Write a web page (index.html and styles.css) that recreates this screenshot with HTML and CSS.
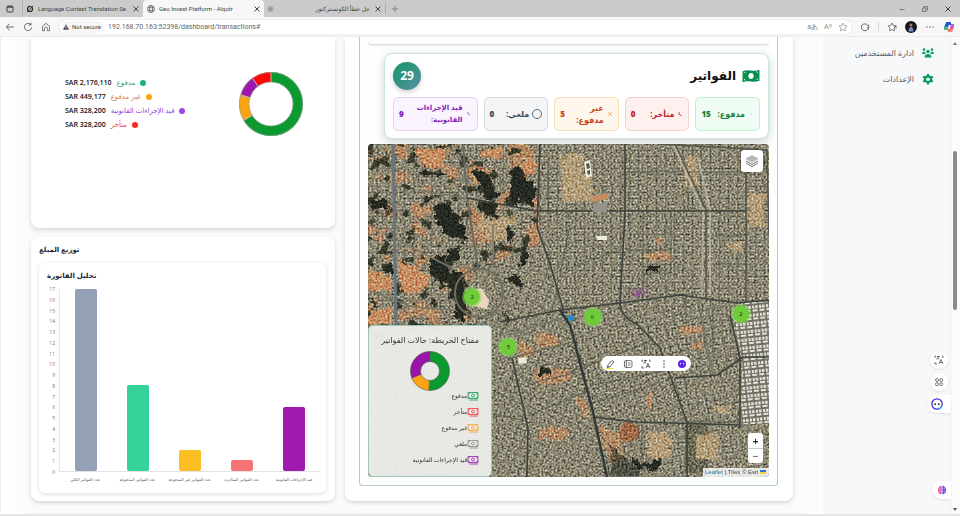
FILE: index.html
```html
<!DOCTYPE html>
<html lang="ar">
<head>
<meta charset="utf-8">
<meta name="viewport" content="width=device-width, initial-scale=1">
<title>Geo Invest Platform - Alqotr</title>
<link rel="stylesheet" href="styles.css">
</head>
<body>
<svg class="defs" aria-hidden="true">
  <symbol id="note" viewBox="0 0 12 10"><path d="M1 1.500h10v6H1zM2.500 9h8.500M1 3.200c1 0 1.700-.7 1.700-1.700M11 3.200c-1 0-1.700-.7-1.700-1.700M1 5.800c1 0 1.700.7 1.700 1.700M11 5.800c-1 0-1.700.7-1.700 1.700" fill="none" stroke="currentColor" stroke-width=".8"/><circle cx="6" cy="4.500" r="1.500" fill="none" stroke="currentColor" stroke-width=".8"/></symbol>
  <symbol id="close" viewBox="0 0 8 8"><path d="M1.500 1.500l5 5M6.500 1.500l-5 5" fill="none" stroke="currentColor"/></symbol>
  <symbol id="translate" viewBox="0 0 10 10"><path d="M1 3V1h1M3 1.500h3M4.500 1v1L2.500 4.500M3.300 2.500L5 4.500M8 1h1v2M1 7v2h2M5 9l2-4.500L9 9M5.800 7.500h2.500" fill="none" stroke="currentColor" stroke-width=".8"/></symbol>
</svg>

<header class="tabs">
  <button class="tab-menu" aria-label="Tab actions"><svg viewBox="0 0 8 8" class="i8"><rect x="1" y="1" width="6" height="6" rx="1" fill="none" stroke="currentColor"/><path d="M1 2h6" stroke="currentColor" stroke-width="1.500"/></svg></button>
  <div class="tab">
    <svg viewBox="0 0 8 8" class="i8"><circle cx="4" cy="4" r="2.500" fill="none" stroke="#222" stroke-width="1.200"/><path d="M1 7.200L7.200.8M2 1.500l1.500-.7" stroke="#222" stroke-width=".8"/></svg>
    <span class="tab-name">Language Context Translation Se</span>
    <button aria-label="Close tab"><svg class="i8"><use href="#close"/></svg></button>
  </div>
  <div class="tab tab-active">
    <svg viewBox="0 0 8 8" class="i8"><g fill="none" stroke="#555" stroke-width=".7"><circle cx="4" cy="4" r="3.500"/><ellipse cx="4" cy="4" rx="1.600" ry="3.500"/><path d="M.8 2.700h6.400M.8 5.300h6.400"/></g></svg>
    <span class="tab-name">Geo Invest Platform - Alqotr</span>
    <button aria-label="Close tab"><svg class="i8"><use href="#close"/></svg></button>
  </div>
  <div class="tab">
    <svg viewBox="0 0 8 8" class="i8"><circle cx="3.500" cy="4" r="3" fill="#aaa"/><path d="M1.500 4h4M3.500 2v4M2 2.500l3 3M5 2.500l-3 3" stroke="#888" stroke-width=".5"/></svg>
    <span class="tab-name" dir="rtl">حل خطأ الكونستركتور</span>
    <button aria-label="Close tab"><svg class="i8"><use href="#close"/></svg></button>
  </div>
  <button class="tab-new" aria-label="New tab"><svg viewBox="0 0 8 8" class="i8"><path d="M4 .8v6.400M.8 4h6.400" stroke="#777" stroke-width=".8"/></svg></button>
  <div class="window-buttons">
    <button aria-label="Minimise"><svg viewBox="0 0 8 8" class="i8"><path d="M1.500 4.500h5" stroke="#777"/></svg></button>
    <button aria-label="Restore"><svg viewBox="0 0 8 8" class="i8"><path d="M1.500 3h3.500v3.500H1.500zM3 3V1.500h3.500V5H5" fill="none" stroke="#666" stroke-width=".8"/></svg></button>
    <button aria-label="Close"><svg class="i8"><use href="#close"/></svg></button>
  </div>
</header>

<nav class="toolbar">
  <button aria-label="Back"><svg viewBox="0 0 10 10" class="i10"><path d="M9 5H1.500M4.500 1.800L1.300 5l3.200 3.200" fill="none" stroke="currentColor" stroke-width=".9"/></svg></button>
  <button aria-label="Reload"><svg viewBox="0 0 10 10" class="i10"><path d="M8.600 5.500A3.600 3.600 0 1 1 7.700 2.500M8 .8v2.200H5.800" fill="none" stroke="currentColor" stroke-width=".9"/></svg></button>
  <button aria-label="Home"><svg viewBox="0 0 10 10" class="i10"><path d="M1.500 4.500L5 1.300l3.500 3.200v4.200h-2V6.500a1.500 1.500 0 0 0-3 0v2.200h-2z" fill="none" stroke="currentColor" stroke-width=".8"/></svg></button>
  <div class="address">
    <button class="secure"><svg viewBox="0 0 8 8" class="i8"><path d="M4 1.200l3 5.600H1z" fill="#444"/><path d="M4 3v2M4 5.500v.8" stroke="#fff" stroke-width=".7"/></svg>Not secure</button>
    <input type="text" aria-label="Address" value="192.168.70.163:52398/dashboard/transactions#">
    <button aria-label="Translate page"><span class="mini">aあ</span></button>
    <button aria-label="Read aloud"><span class="mini">A⁾⁾</span></button>
    <button aria-label="Add to favourites"><svg viewBox="0 0 10 10" class="i10"><path id="star" d="M5 1l1.200 2.600 2.800.4-2 2 .5 2.900L5 7.500 2.500 8.900 3 6 1 4l2.800-.4z" fill="none" stroke="currentColor" stroke-width=".7"/></svg></button>
  </div>
  <button aria-label="Extensions"><svg viewBox="0 0 10 10" class="i10"><path d="M7.500 3.200a3.400 3.400 0 1 0 0 4.200l1-.2V5.500H7.300M7.500 3.200h1.200v2" fill="none" stroke="currentColor" stroke-width=".9"/></svg></button>
  <i class="divider"></i>
  <button aria-label="Favourites"><svg viewBox="0 0 10 10" class="i10"><use href="#star"/><path d="M7 4h3M7.500 6H10" stroke="currentColor" stroke-width=".7"/></svg></button>
  <button aria-label="Profile"><svg viewBox="0 0 12 12" class="i12"><circle cx="6" cy="6" r="6" fill="#15151f"/><circle cx="6" cy="4" r="1.500" fill="#b07a64"/><path d="M3.500 10.500q0-4.500 2.500-4.500t2.500 4.500z" fill="#6f8fc4"/></svg></button>
  <button class="more" aria-label="Settings"><svg viewBox="0 0 10 10" class="i10"><g fill="currentColor"><circle cx="2" cy="5" r=".7"/><circle cx="5" cy="5" r=".7"/><circle cx="8" cy="5" r=".7"/></g></svg></button>
  <button aria-label="Copilot"><svg viewBox="0 0 12 12" class="i12"><path d="M3.500 1h4l1 3H6L4.500 9H2Q.5 9 1 6.500z" fill="#2389dd"/><path d="M3.500 1h4l1 3H5.500L4 5.500H1.300z" fill="#2458c8"/><path d="M2 6h2.500l-.8 3H2Q.8 8.500 2 6z" fill="#62bd4a"/><path d="M8 3h2q1.500.3 1 2.500L9 10.500H5L4 8h2.200z" fill="#df5bb0"/><path d="M8 3h2q1.500.3 1 2.500l-.3 1H7z" fill="#b25be0"/><path d="M4 8h5.800L9 10.500H5z" fill="#f9774f"/><path d="M6 4.500h1.700L6.500 7.500H5z" fill="#fff"/></svg></button>
</nav>

<div class="page">
  <main class="content">
    <section class="column">
      <article class="card totals">
        <dl class="amounts">
          <div><dd>SAR 2,176,110</dd><dt class="c-green" dir="rtl">مدفوع</dt><i class="dot bg-green"></i></div>
          <div><dd>SAR 449,177</dd><dt class="c-amber" dir="rtl">غير مدفوع</dt><i class="dot bg-amber"></i></div>
          <div><dd>SAR 328,200</dd><dt class="c-purple" dir="rtl">قيد الإجراءات القانونية</dt><i class="dot bg-purple"></i></div>
          <div><dd>SAR 328,200</dd><dt class="c-red" dir="rtl">متأخر</dt><i class="dot bg-red"></i></div>
        </dl>
        <svg class="donut" viewBox="0 0 64 64" role="img" aria-label="توزيع المبلغ">
          <g fill="none" stroke-width="10" transform="rotate(-90 32 32)">
            <circle cx="32" cy="32" r="27" pathLength="1000" stroke="#0a9a2f" stroke-dasharray="663 337"/>
            <circle cx="32" cy="32" r="27" pathLength="1000" stroke="#fba40f" stroke-dasharray="137 863" stroke-dashoffset="-663"/>
            <circle cx="32" cy="32" r="27" pathLength="1000" stroke="#9c17ac" stroke-dasharray="100 900" stroke-dashoffset="-800"/>
            <circle cx="32" cy="32" r="27" pathLength="1000" stroke="#fd0606" stroke-dasharray="100 900" stroke-dashoffset="-900"/>
          </g>
          <path d="M32 0v10M4.500 48.500l8.600-5.200M1.300 23.500l9.800 2.400M13.500 6.200l5.800 8.200" stroke="#b5b5b5"/>
          <g fill="none" stroke="#999" stroke-width=".7"><circle cx="32" cy="32" r="31.600"/><circle cx="32" cy="32" r="22"/></g>
        </svg>
      </article>
      <article class="card distribution">
        <h2 dir="rtl">توزيع المبلغ</h2>
        <div class="chart-card">
          <h3 dir="rtl">تحليل الفاتورة</h3>
          <div class="chart">
            <ol class="axis"><li>17</li><li>16</li><li>15</li><li>14</li><li>13</li><li>12</li><li>11</li><li>10</li><li>9</li><li>8</li><li>7</li><li>6</li><li>5</li><li>4</li><li>3</li><li>2</li><li>1</li><li>0</li></ol>
            <div class="bars">
              <i class="bar b-slate" style="height:100%"></i>
              <i class="bar b-green" style="height:47.06%"></i>
              <i class="bar b-amber" style="height:11.76%"></i>
              <i class="bar b-red" style="height:5.88%"></i>
              <i class="bar b-purple" style="height:35.29%"></i>
            </div>
            <div class="bar-names" dir="ltr"><span dir="rtl">عدد الفواتير الكلي</span><span dir="rtl">عدد الفواتير المدفوعة</span><span dir="rtl">عدد الفواتير غير المدفوعة</span><span dir="rtl">عدد الفواتير المتأخرة</span><span dir="rtl">قيد الإجراءات القانونية</span></div>
          </div>
        </div>
      </article>
    </section>

    <section class="card board">
      <div class="panel">
        <div class="previous"></div>
        <div class="invoices">
          <div class="invoices-head">
            <strong class="count">29</strong>
            <h1 dir="rtl">الفواتير</h1>
            <svg class="cash" viewBox="0 0 18 14"><path d="M.5 2.300q4.200-1.800 8.500-.8t8.500-.8v11q-4.200 1.700-8.500.8t-8.500.8z" fill="#0b8f51"/><ellipse cx="9" cy="7" rx="2.600" ry="3" fill="#fff"/><path d="M2 4.500l1.500-1.500M14.500 2.500L16 3.700M2 10l1.500 1.500M14.500 11l1.500-1.500" fill="none" stroke="#fff" stroke-width=".9"/></svg>
          </div>
          <div class="stats">
            <div class="stat s-purple"><b>9</b><span dir="rtl">قيد الإجراءات القانونية:</span><svg viewBox="0 0 6 6"><path d="M2 1v2l2 1" fill="none" stroke="currentColor" stroke-width=".6"/></svg></div>
            <div class="stat s-gray"><b>0</b><span dir="rtl">ملغي:</span><svg class="ring" viewBox="0 0 10 10"><circle cx="5" cy="5" r="4.500" fill="none" stroke="currentColor" stroke-width=".8"/></svg></div>
            <div class="stat s-orange"><b>5</b><span dir="rtl">غير مدفوع:</span><svg viewBox="0 0 6 6"><path d="M.8.800l4.400 4.400M5.200.800L.8 5.200" stroke="#eda76a" stroke-width=".8"/></svg></div>
            <div class="stat s-red"><b>0</b><span dir="rtl">متأخر:</span><svg viewBox="0 0 6 6"><path d="M2 1v2.500l2.500 1" fill="none" stroke="currentColor" stroke-width=".8"/></svg></div>
            <div class="stat s-green"><b>15</b><span dir="rtl">مدفوع:</span><svg viewBox="0 0 6 6"><path d="M2 3l1 .5 1-1" fill="none" stroke="#8c9" stroke-width=".6"/></svg></div>
          </div>
        </div>

        <div class="map">
          <svg class="imagery" viewBox="0 0 401 333" preserveAspectRatio="xMidYMid slice" aria-label="صورة فضائية">
            <defs>
              <filter id="grain" x="0" y="0" width="100%" height="100%" color-interpolation-filters="sRGB"><feTurbulence type="fractalNoise" baseFrequency=".5" numOctaves="2" seed="4"/><feColorMatrix values="1.800 0 0 0 -.4  1.800 0 0 0 -.4  1.800 0 0 0 -.4  0 0 0 0 1"/></filter>
              <filter id="scrub" x="0" y="0" width="100%" height="100%" color-interpolation-filters="sRGB"><feTurbulence type="fractalNoise" baseFrequency=".08" numOctaves="4" seed="11"/><feColorMatrix values="0 0 0 0 .16  0 0 0 0 .18  0 0 0 0 .13  14 0 0 0 -8.600"/></filter>
              <filter id="soil" x="0" y="0" width="100%" height="100%" color-interpolation-filters="sRGB"><feTurbulence type="fractalNoise" baseFrequency=".05" numOctaves="5" seed="23"/><feColorMatrix values="0 0 0 0 .74  0 0 0 0 .54  0 0 0 0 .38  0 9 0 0 -4.900"/></filter>
              <filter id="rough" x="-10%" y="-10%" width="120%" height="120%"><feTurbulence type="fractalNoise" baseFrequency=".16" numOctaves="3" seed="8"/><feDisplacementMap in="SourceGraphic" scale="11" xChannelSelector="R" yChannelSelector="G"/></filter>
              <pattern id="blocks" width="9" height="6" patternUnits="userSpaceOnUse"><rect width="9" height="6" fill="#8f8977"/><path d="M0 0h9M0 0v6" stroke="#64645a" stroke-width="1.200"/><path d="M2 2h1.500v1H2zM6 1.500h2v1H6zM4 4h1.500v1H4zM7 4h1v1H7z" fill="#c0baa9"/></pattern>
              <pattern id="blocksA" href="#blocks" patternTransform="rotate(-22)"/>
              <pattern id="blocksB" href="#blocks" patternTransform="rotate(-10)"/>
              <pattern id="blocksC" href="#blocks" patternTransform="rotate(24)"/>
              <pattern id="sheds" width="7" height="8" patternUnits="userSpaceOnUse" patternTransform="rotate(-6)"><rect width="7" height="8" fill="#6f6d62"/><path d="M1 1h2v3H1zM4 1h2.500v3H4zM1 5h5v2H1z" fill="#f5f3ec"/></pattern>
              <clipPath id="west"><path d="M0 0h165l8 100-65 25-10 85H0z"/></clipPath>
            </defs>
            <rect width="401" height="333" fill="url(#blocks)"/>
            <path d="M110 124l65-10 20 52 50 167H124V180z" fill="url(#blocksC)"/>
            <path d="M202 170l50-8 150 0v171H240z" fill="url(#blocksB)"/>
            <path d="M202 163l50-5 7 20 40 40 20 60-95-7z" fill="url(#blocksA)"/>
            <rect width="401" height="333" fill="#73704f" opacity=".15"/>
            <g clip-path="url(#west)"><rect width="225" height="210" filter="url(#soil)" opacity=".8"/><rect width="225" height="210" filter="url(#scrub)" opacity=".85"/></g>
            <g filter="url(#rough)" fill="#c68e62">
              <path d="M48 4h28v20H56zM112 5h22v9h-22zM150 22l18-12v18l-14 6zM0 126l24 8v14H0zM0 165h24v15H0zM30 113l32 20-7 14-20 2z"/>
              <path d="M150 195l15 8-2 10-12 4zM168 190h22v12h-22zM165 225h35v14h-32zM172 285h28v9h-28zM208 250l14 16-3 8-12-16zM228 279l22 12 6 25-12 6z" opacity=".65"/>
              <path d="M192 10h22v20h10v28h-28zM107 78l40-6-8 25-22-2zM318 13h12v14h-12zM315 28h14v14h-14zM380 48h17v35h-17zM362 98h12v9h-12z" fill="#b8a179" opacity=".85"/>
              <path d="M280 289h22v25h-22zM326 290h24v26h-24zM348 262h14v6h-14z" fill="#b59d79"/>
              <path d="M313 182h22v8h-22zM323 198h10v6h-10zM265 213h6v10h-6zM278 250h6v13h-6zM275 108h28v8h-28zM288 95h6v6h-6z" opacity=".7"/>
            </g>
            <g filter="url(#rough)" fill="#282c23">
              <path d="M104 26q18-4 20 14l8 10q-6 10-16 4zM142 26l8-4 18 22-2 18-9-1-5-7-5 9-4-6zM108 57l20 2 2 16-12-2zM66 62l12-6 18 26 4 14-18-3-14-12zM80 105h12v12H80zM62 112h14l8 22-12 6-10-12zM78 128h18v22l-12 8zM153 104l8 4-5 16h-4zM140 133h14v8h-10zM15 121h10v8H15zM2 55l18 2v8H4zM140 83l6 6-2 10-4-2zM88 145l10 4-2 30-10-7zM134 165l10 12-4 4zM52 27l26 1v3H54z"/>
              <path d="M262 311l14 10 20-8-8 12h-18zM170 224h10v7h-10zM278 122h14v6h-14z"/>
              <path d="M243 300l30 28-3 5h-27z" opacity=".6"/>
            </g>
            <circle cx="261" cy="288" r="10" fill="#9c6848"/>
            <path d="M317 279h23v50h-23z" fill="#62614c" opacity=".8"/><path d="M328 291h22v24h-22z" fill="#b19c78"/>
            <rect width="401" height="333" filter="url(#grain)" class="grain"/>
            <path d="M375 158h26v122h-28l1-65-10-48z" fill="url(#sheds)" opacity=".85"/>
            <g fill="none" stroke="#4d5147" stroke-linejoin="round">
              <path d="M257 28h120M257 106h47M303 67v62M320 28v38M275 67v90M202 67h10M180 20v50M344 92h34M344 120h34M275 129h28M318 152v30M274 274v59M319 278h55M202 228l80-30M225 241l76-15M225 259l60-18M144 214l60-16M160 240l50-12M160 272l60-25M124 246l32 16M126 270l32 7M250 106l-48 18M202 80l-10 50M130 104l-10 22M345 160v60" stroke-width=".9" opacity=".85"/>
              <path d="M0 146l45 17 43 3M29 96l53 27 28 1M50 46l49 8M132 171l10 20 60-20M125 80v44M345 230l-15-75M238 333l80 0" stroke="#77786a" stroke-width="1.500"/>
              <path d="M25 0l3 180v153" stroke="#68757a" stroke-width="3"/>
              <path d="M95 0l4 53 11 71" stroke="#666b62" stroke-width="2"/>
              <circle cx="111" cy="149" r="24" stroke="#716d5c" stroke-width="2"/>
              <path d="M305 0l30 66-1 87M330 13l12 53v86" stroke="#d3ccb7" stroke-width="2" opacity=".6"/><path d="M307 0l31 66v87M378 20v138M399 6l2 85M290 0l110 6" stroke="#555549" stroke-width="1.500"/>
              <path d="M99 54l70 13h209M172 0l-3 83 13 37 14 48M257 0v70l-5 89q0 13 18 22l22 23 27 74v55M132 178l60-12 60-7 60-8 57 8 32-3M144 214l16 70-1 49M307 234l42-3 26-18h26M362 171l10 43v70M225 273l44 5 103 3" stroke="#3c423d" stroke-width="1.600"/>
              <path d="M192 166l10 15 23 87 14 65" stroke="#2e3937" stroke-width="2.500"/>
            </g>
            <path d="M229 92h10v4h-10zM150 214l8-1 1 6-8 1zM216 18l6-2 2 16-6 2z" fill="#eeeadb"/><path d="M218 20l3-1 1 5-3 1zM219 27l3-1v4l-2 1z" fill="#56564c"/>
            <path d="M224 52l16-3v6l-15 3z" fill="#c58d61"/><path d="M225 60l14-2v10h-14z" fill="#94928a"/>
            <path d="M101 147l12-3 8 12-2 9-18-4z" fill="#ead5bd"/>
            <g fill="none" stroke="#9d2db0"><path d="M265 146h11v6h-11z" stroke-dasharray="2 1"/><circle cx="270" cy="149" r="1.500"/></g>
            <circle cx="203" cy="174" r="3" fill="#238bd4"/>
          </svg>
          <span class="cluster k1">2</span><span class="cluster k2">6</span><span class="cluster k3">2</span><span class="cluster k4">5</span>
          <button class="layers" aria-label="الطبقات"><svg viewBox="0 0 14 14"><path d="M1 8.500L7 12l6-3.500v1.300L7 13.300 1 9.800z" fill="#8a8a8a"/><path d="M1 6.300l6 3.500 6-3.500v1.400l-6 3.500-6-3.500z" fill="#9c9c9c"/><path d="M1 4.200L7 1l6 3.200v1L7 8.700 1 5.200z" fill="#b9b9b9"/></svg></button>
          <div class="legend">
            <h2 dir="rtl">مفتاح الخريطة: حالات الفواتير</h2>
            <svg class="legend-donut" viewBox="0 0 40 40" role="img" aria-label="حالات الفواتير">
              <g fill="none" stroke-width="10" transform="rotate(-90 20 20)"><circle cx="20" cy="20" r="14.500" pathLength="100" stroke="#0a9a2f" stroke-dasharray="51 49"/><circle cx="20" cy="20" r="14.500" pathLength="100" stroke="#fba40f" stroke-dasharray="18 82" stroke-dashoffset="-51"/><circle cx="20" cy="20" r="14.500" pathLength="100" stroke="#9a14aa" stroke-dasharray="31 69" stroke-dashoffset="-69"/></g>
              <g fill="none" stroke="#555" stroke-width=".6"><circle cx="20" cy="20" r="19.500"/><circle cx="20" cy="20" r="9.500"/><path d="M20 .5v10M18.800 39.500l.6-10M1.700 27l9-3.500"/></g>
            </svg>
            <ul>
              <li><span dir="rtl">مدفوع</span><svg class="n-green"><use href="#note"/></svg></li>
              <li><span dir="rtl">متأخر</span><svg class="n-red"><use href="#note"/></svg></li>
              <li><span dir="rtl">غير مدفوع</span><svg class="n-amber"><use href="#note"/></svg></li>
              <li><span dir="rtl">ملغي</span><svg class="n-gray"><use href="#note"/></svg></li>
              <li><span dir="rtl">قيد الإجراءات القانونية</span><svg class="n-purple"><use href="#note"/></svg></li>
            </ul>
          </div>
          <div class="selection">
            <button aria-label="Highlight"><svg viewBox="0 0 10 10"><path d="M2.500 6.500l4.500-5 2 1.500-4.500 5zM2.500 6.500L2 8.500l2.500-.5" fill="none" stroke="#444" stroke-width=".8"/><path d="M1 9.500h7" stroke="#f1e22c"/></svg></button>
            <button aria-label="Notes"><svg viewBox="0 0 10 10"><path d="M3 1.500h4.500q1.500 0 1.500 1.500v4q0 1.500-1.500 1.500H3Q1.500 8.500 1.500 7V3Q1.500 1.500 3 1.500zM3.500 1.500v7M.8 3.500h1.500M.8 6.500h1.500M5 4h2.500M5 6h2.500" fill="none" stroke="#444" stroke-width=".7"/></svg></button>
            <button aria-label="Translate"><svg><use href="#translate"/></svg></button>
            <button aria-label="More"><svg viewBox="0 0 10 10"><g fill="#444"><circle cx="5" cy="2" r=".8"/><circle cx="5" cy="5" r=".8"/><circle cx="5" cy="8" r=".8"/></g></svg></button>
            <button aria-label="Assistant"><svg viewBox="0 0 10 10"><circle cx="5" cy="5" r="4" fill="#5a28e0"/><path d="M3.500 4v1.300M6.500 4v1.300" stroke="#fff"/></svg></button>
          </div>
          <div class="zoom"><button aria-label="Zoom in">+</button><button aria-label="Zoom out">−</button></div>
          <p class="credit"><a href="#">Leaflet</a> | Tiles © Esri <i class="flag"></i></p>
        </div>
      </div>
    </section>
  </main>

  <aside class="sidebar">
    <a href="#"><span dir="rtl">ادارة المستخدمين</span><svg viewBox="0 0 12 12"><g fill="#0a9a63"><circle cx="2" cy="2.500" r="1.300"/><circle cx="10" cy="2.500" r="1.300"/><circle cx="6" cy="4.500" r="1.700"/><path d="M0 7q0-2.500 2-2.500 1.500 0 1.700 2L2.500 7zM12 7q0-2.500-2-2.500-1.500 0-1.700 2L9.500 7zM2.500 10.500Q2.500 7 6 7t3.500 3.500z"/></g></svg></a>
    <a href="#"><span dir="rtl">الإعدادات</span><svg viewBox="0 0 12 12"><path d="M5 1h2l.4 1.600 1.300.7 1.600-.5 1 1.700-1.200 1.100v1.200l1.200 1.100-1 1.700-1.600-.5-1.300.7L7 11.400H5l-.4-1.600-1.300-.7-1.600.5-1-1.700 1.200-1.100V5.600L.7 4.500l1-1.700 1.600.5 1.300-.7z" fill="#0a9a63"/><circle cx="6" cy="6.200" r="1.800" fill="#f6f8fa"/></svg></a>
  </aside>
  <div class="scroll"><i class="up"></i><i class="thumb"></i><i class="down"></i></div>

  <div class="floaters">
    <button class="round" aria-label="Translate"><svg><use href="#translate"/></svg></button>
    <button class="round" aria-label="Apps"><svg viewBox="0 0 10 10"><g fill="none" stroke="#555" stroke-width=".8"><circle cx="3" cy="3" r="1.500"/><circle cx="7.200" cy="3" r="1.500"/><circle cx="3" cy="7.200" r="1.500"/><circle cx="7.200" cy="7.200" r="1.500"/></g></svg></button>
    <button class="edge" aria-label="Assistant"><svg class="i12" viewBox="0 0 12 12"><circle cx="6" cy="6" r="5.200" fill="#fff" stroke="#4527d8" stroke-width="1.300"/><path d="M10.800 8A5.200 5.200 0 0 1 7 11" fill="none" stroke="#37a8ef" stroke-width="1.300"/><circle cx="4.200" cy="6.200" r=".9" fill="#222"/><circle cx="7.800" cy="6.200" r=".9" fill="#222"/></svg></button>
    <button class="edge brain" aria-label="Memory"><svg viewBox="0 0 10 10"><path d="M4.600 1v8Q3 9.700 2.500 8.300 1 8 1.300 6.500.2 5.500 1.200 4 1 2.500 2.500 2 3.500.3 4.600 1z" fill="#e0569a"/><path d="M5.400 1v8q1.600.7 2.100-.7Q9 8 8.700 6.500 9.800 5.500 8.800 4 9 2.500 7.500 2 6.500.3 5.400 1z" fill="#6a4ae8"/><path d="M2 4h1.500M2 6.500h1.500M6.500 4H8M6.500 6.500H8" stroke="#fff" stroke-width=".5"/></svg></button>
  </div>
</div>
</body>
</html>
```
FILE: styles.css
```css
* { box-sizing: border-box; margin: 0; padding: 0; }
body {
  min-height: 100vh;
  display: flex;
  flex-direction: column;
  background: #f5f5f5;
  color: #1f2937;
  font-family: "Open Sans", "DejaVu Sans", sans-serif;
  font-size: 7px;
  line-height: 14px;
}
button { border: 0; background: none; color: inherit; font: inherit; display: flex; align-items: center; justify-content: center; }
svg { display: block; flex: none; }
ol, ul { list-style: none; }
i { font-style: normal; }
a { text-decoration: none; }
.defs { position: absolute; width: 0; height: 0; }
.i8 { width: 8px; height: 8px; }
.i10 { width: 10px; height: 10px; }
.i12 { width: 12px; height: 12px; }

.tabs, .toolbar { font-family: Roboto, "DejaVu Sans", sans-serif; }
.tabs { display: flex; align-items: stretch; height: 17px; padding-left: 6px; background: #cbcbcb; color: #444; font-size: 6px; }
.tab-menu { padding-right: 8px; }
.tab { display: flex; align-items: center; gap: 4px; width: 121px; padding: 0 3px; border-left: 1px solid #b5b5b5; }
.tab-name { flex: 1; white-space: nowrap; line-height: 16px; }
.tab-active { background: #f7f7f7; border-radius: 4px 4px 0 0; border-left-color: #f7f7f7; }
.tab:nth-of-type(3) { border-left: 0; }
.tab-new { padding-left: 5px; margin: 3px 0; border-left: 1px solid #aaa; }
.window-buttons { display: flex; gap: 15px; margin-left: auto; padding-right: 8px; }

.toolbar { display: flex; align-items: center; gap: 8px; height: 20px; padding: 0 5px; background: #f7f7f7; border-bottom: 1px solid #ececec; color: #555; }
.address { flex: 1; display: flex; align-items: center; gap: 4px; height: 14px; padding: 0 4px 0 3px; border-radius: 7px; background: #fff; box-shadow: 0 0 1px #bbb; color: #888; }
.address input { flex: 1; min-width: 0; border: 0; outline: 0; background: none; font: inherit; color: #666; }
.address > button + button { padding-left: 2px; }
.secure { gap: 2px; height: 12px; padding: 0 3px 0 0; border-radius: 6px; background: #f6f6f6; color: #444; font-size: 6px; }
.mini { font-size: 7px; }
.divider { width: 1px; height: 9px; background: #d5d5d5; }

.page { flex: 1; display: flex; position: relative; background: #fdfdfe; border-bottom: 2px solid #e5e5e5; }
.content { flex: 1; min-width: 0; display: grid; grid-template-columns: 304fr 448fr; align-items: start; gap: 10px; padding: 0 30px 12px; border-left: 1px solid #f0f0f0; background: linear-gradient(90deg, #fff, #fafafa 4%, #fafafa 96%, #fdfdfd); }
.column { display: grid; gap: 9px; }
.card { background: #fff; border-radius: 8px; box-shadow: 0 2px 4px rgba(0, 0, 0, .14); }
.column .totals { border-radius: 0 0 8px 8px; }

.totals { display: flex; align-items: flex-start; justify-content: space-between; padding: 35px 32px 92px 34px; }
.amounts { padding-top: 4px; }
.amounts > div { display: flex; align-items: center; gap: 5px; }
.amounts dd { color: #111; font-weight: 600; }
.dot { width: 6px; height: 6px; border-radius: 50%; }
.donut { width: 64px; height: 64px; }
.c-green { color: #3d9d72; } .c-amber { color: #d9823b; } .c-purple { color: #8b3de0; } .c-red { color: #ee4444; }
.bg-green { background: #15b57c; } .bg-amber { background: #fba40f; } .bg-purple { background: #a144e8; } .bg-red { background: #f22; }

.distribution { padding: 6px 9px 8px 8px; }
.distribution h2, .distribution h3 { text-align: left; font-size: 7px; line-height: 14px; }
.chart-card { margin-top: 6px; padding: 6px 6px 10px 8px; border-radius: 6px; background: #fff; box-shadow: 0 1px 4px rgba(0, 0, 0, .14); }
.chart { display: grid; grid-template-columns: 12px 1fr; padding-top: 1px; }
.axis { height: 193px; display: flex; flex-direction: column; justify-content: space-between; padding-right: 4px; font-size: 5px; line-height: 10px; color: #777; text-align: right; }
.bars { display: grid; grid-template-columns: repeat(5, 1fr); align-items: end; justify-items: center; margin: 5px 0; border-left: 1px solid #e8e8e8; border-bottom: 1px solid #e2e2e2; }
.bar { width: 22px; border-radius: 2px; }
.b-slate { background: #94a0b5; } .b-green { background: #35d399; } .b-amber { background: #fbbf24; } .b-red { background: #f57373; } .b-purple { background: #a01aae; }
.bar-names { grid-column: 2; display: grid; grid-template-columns: repeat(5, 1fr); font-size: 4px; line-height: 6px; color: #555; text-align: center; white-space: nowrap; }
.bar-names span { display: flex; justify-content: center; }

.board { padding: 0 15px 15px 14px; border-radius: 0 0 8px 8px; }
.panel { padding: 0 8px 8px; border: 1px solid #b3cac6; border-top: 0; border-radius: 0 0 4px 4px; background: #fdfefe; }
.previous { height: 8px; border-bottom: 1px solid #ddd; border-radius: 0 0 4px 4px; box-shadow: 0 1px 2px rgba(0, 0, 0, .08); }
.invoices { margin: 8px 0 5px 16px; padding: 8px 8px 7px; border: 1px solid #c9e6dc; border-radius: 8px; background: #fff; box-shadow: 0 3px 10px rgba(0, 0, 0, .18); }
.invoices-head { display: flex; align-items: center; gap: 6px; }
.invoices h1 { margin-left: auto; color: #111; font-size: 12px; line-height: 20px; }
.cash { width: 18px; height: 14px; }
.count { display: grid; place-items: center; width: 28px; height: 28px; border-radius: 50%; background: linear-gradient(135deg, #149669, #5a90a0); box-shadow: 0 2px 5px rgba(0, 0, 0, .2); color: #fff; font-size: 12px; }
.stats { display: grid; grid-template-columns: 85fr 65fr 65fr 65fr 65fr; gap: 6px; margin-top: 7px; }
.stat { display: flex; align-items: center; gap: 3px; min-width: 0; min-height: 34px; padding: 0 5px; border: 1px solid; border-radius: 5px; font-size: 8px; line-height: 12px; font-weight: 700; }
.stat span { flex: 1; min-width: 0; }
.stat svg { width: 6px; height: 6px; }
.stat .ring { width: 10px; height: 10px; }
.s-purple { background: #faf4ff; border-color: #e5d0f7; color: #8420b8; }
.s-purple span { font-size: 7px; }
.s-gray { background: #f2f4f6; border-color: #d6dade; color: #3f4754; }
.s-orange { background: #fff7ec; border-color: #fadcb8; color: #c54218; }
.s-red { background: #fff0f0; border-color: #f8cfcf; color: #c02020; }
.s-green { background: #effcf3; border-color: #c3efd0; color: #16803f; }

.map { position: relative; overflow: hidden; border-radius: 4px; }
.imagery { width: 100%; height: auto; aspect-ratio: 401 / 333; }
.grain { mix-blend-mode: overlay; opacity: .6; }
.cluster { position: absolute; display: grid; place-items: center; width: 16px; height: 16px; border-radius: 50%; background: #6ecc39; box-shadow: 0 0 0 2px rgba(142, 220, 100, .55); font-size: 6px; color: #222; transform: translate(-50%, -50%); }
.k1 { left: 26%; top: 46%; } .k2 { left: 56%; top: 52%; } .k3 { left: 93%; top: 51%; } .k4 { left: 35%; top: 61%; }
.layers { position: absolute; right: 6px; top: 6px; width: 22px; height: 22px; border-radius: 3px; background: #fff; box-shadow: 0 0 2px #333; }
.layers svg { width: 14px; height: 14px; }
.legend { position: absolute; left: 0; bottom: 0; width: 31%; padding: 7px 12px 8px 6px; border: 1px solid #9cc8b6; border-radius: 5px; background: rgba(235, 235, 233, .97); color: #333; }
.legend h2 { margin-right: -6px; font-size: 8px; line-height: 14px; font-weight: 400; text-align: center; white-space: nowrap; }
.legend-donut { width: 40px; height: 40px; margin: 4px auto 0; transform: translateX(3px); }
.legend ul { margin-top: -3px; }
.legend li { display: flex; align-items: center; justify-content: flex-end; height: 16px; font-size: 6px; }
.legend li svg { width: 12px; height: 10px; }
.n-green { color: #16994f; } .n-red { color: #f23b3b; } .n-amber { color: #f7a32d; } .n-gray { color: #888; } .n-purple { color: #9a22ac; }
.selection { position: absolute; left: 58%; top: 212px; display: flex; align-items: center; justify-content: space-around; gap: 8px; height: 15px; padding: 0 4px; border-radius: 8px; background: #fff; color: #444; }
.selection svg { width: 10px; height: 10px; }
.zoom { position: absolute; right: 6px; bottom: 14px; width: 15px; border-radius: 3px; background: #fff; overflow: hidden; color: #222; }
.zoom button { width: 15px; height: 15px; font-size: 10px; font-weight: 700; }
.zoom button + button { border-top: 1px solid #ccc; color: #777; }
.credit { position: absolute; right: 0; bottom: 0; padding: 0 3px 0 2px; background: rgba(255, 255, 255, .8); color: #444; font-family: "Liberation Sans", sans-serif; font-size: 6px; line-height: 9px; }
.credit a { color: #1c7fb0; }
.flag { display: inline-block; width: 6px; height: 4px; background: linear-gradient(#2b78d8 50%, #f6d32d 50%); }

.sidebar { width: 127px; padding: 3px 16px; background: #f6f8fa; color: #555b65; font-size: 8px; }
.sidebar a { display: flex; align-items: center; justify-content: flex-end; gap: 8px; height: 26px; color: inherit; }
.sidebar svg { width: 12px; height: 12px; }
.scroll { width: 10px; display: flex; flex-direction: column; align-items: center; padding: 5px 1px 3px 0; background: #fbfbfb; border-left: 1px solid #eee; }
.up, .down { border: 2px solid transparent; }
.up { border-bottom: 3px solid #777; border-top: 0; }
.down { border-top: 3px solid #555; border-bottom: 0; }
.thumb { flex: 0 0 34%; width: 4px; margin: 106px 0 auto; border-radius: 2px; background: #8a8a8a; }
.floaters { position: absolute; right: 9px; bottom: 15px; display: flex; flex-direction: column; align-items: flex-end; gap: 4px; color: #555; }
.floaters button { background: #fff; box-shadow: 0 1px 3px rgba(0, 0, 0, .1); }
.floaters svg { width: 10px; height: 10px; }
.floaters svg.i12 { width: 12px; height: 12px; }
.round { width: 18px; height: 18px; margin-right: 3px; border-radius: 50%; }
.edge { width: 24px; height: 18px; border-radius: 9px 0 0 9px; padding-right: 4px; }
.brain { width: 19px; margin-top: 64px; padding: 0; }
```
